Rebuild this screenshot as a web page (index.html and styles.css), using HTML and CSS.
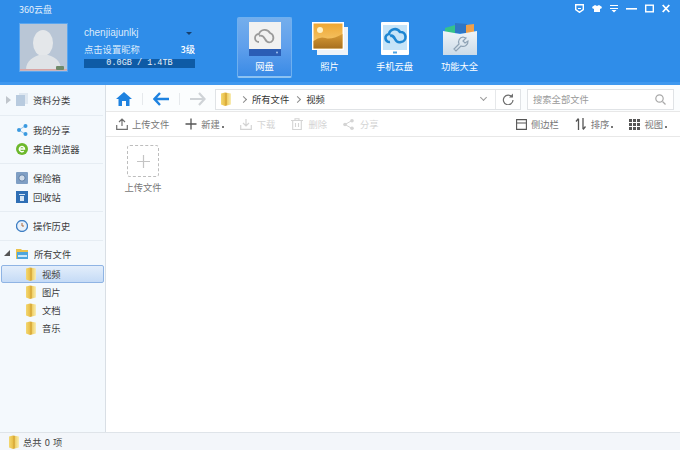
FILE: index.html
```html
<!DOCTYPE html>
<html lang="zh">
<head>
<meta charset="utf-8">
<title>360云盘</title>
<link rel="stylesheet" href="styles.css">
</head>
<body>
<svg class="defs" width="0" height="0">
  <defs>
    <linearGradient id="fold" x1="0" y1="0" x2="1" y2="0"><stop offset="0" stop-color="#f3d873"/><stop offset=".42" stop-color="#e8bd45"/><stop offset=".5" stop-color="#c9952a"/><stop offset=".62" stop-color="#f0d065"/><stop offset="1" stop-color="#f8ecb4"/></linearGradient>
    <linearGradient id="sky" x1="0" y1="0" x2="0" y2="1"><stop offset="0" stop-color="#efa733"/><stop offset="1" stop-color="#f6cf7a"/></linearGradient>
    <linearGradient id="hill" x1="0" y1="0" x2="0" y2="1"><stop offset="0" stop-color="#d89a35"/><stop offset="1" stop-color="#a8701f"/></linearGradient>
    <linearGradient id="box" x1="0" y1="0" x2="0" y2="1"><stop offset="0" stop-color="#f0f4f8"/><stop offset="1" stop-color="#ccdbe8"/></linearGradient>
    <symbol id="folder" viewBox="0 0 12 14"><path d="M1 1.500l4-1 6 1v11l-6 1.500-4-1.500z" fill="url(#fold)"/></symbol>
  </defs>
</svg>
<div class="app">
  <header class="top">
    <div class="user">
      <div class="app-title">360云盘</div>
      <div class="user-row">
        <svg class="avatar" width="47" height="47" viewBox="0 0 47 47">
          <rect width="47" height="47" fill="#b9c6d6"/>
          <ellipse cx="23" cy="19" rx="10" ry="13" fill="#e4e7ea"/>
          <path d="M6 46c0-10 8-13 13-15h9c6 2 13 5 13 15z" fill="#dfe3e7"/>
          <rect y="45" width="47" height="1.500" fill="#d8a5a5"/>
          <rect x="36" y="42" width="8" height="4" rx="1" fill="#6f8a6a"/>
        </svg>
        <div class="user-info">
          <div class="info-line"><span>chenjiajunlkj</span><i class="caret"></i></div>
          <div class="info-line"><span>点击设置昵称</span><b>3级</b></div>
          <div class="quota">0.0GB / 1.4TB</div>
        </div>
      </div>
    </div>
    <nav class="tabs">
      <div class="tab tab-on">
        <svg width="32" height="34" viewBox="0 0 32 34"><rect width="32" height="34" fill="#f1f1f1"/><rect y="27" width="32" height="7" fill="#2b5db5"/><circle cx="28" cy="30.500" r="1" fill="#9fc0ee"/><path d="M10 20a4 4 0 0 1 0-8 6 6 0 0 1 11-1 5 5 0 0 1 1 9c-3 1-5-1-6-3s-3-4-6-3" fill="none" stroke="#9a9a9a" stroke-width="1.800"/></svg>
        <span>网盘</span>
      </div>
      <div class="tab">
        <svg width="36" height="33" viewBox="0 0 36 33"><rect x="5" y="5" width="31" height="28" fill="#eef3f8"/><rect width="32" height="28" fill="#fff"/><rect x="1.500" y="1.500" width="29" height="25" fill="url(#sky)"/><path d="M1.500 19q6-5 12-3t17-4v14.500h-29z" fill="url(#hill)"/><circle cx="8" cy="8" r="3" fill="#fff3c8"/></svg>
        <span>照片</span>
      </div>
      <div class="tab">
        <svg width="28" height="33" viewBox="0 0 28 33"><rect width="28" height="33" rx="1" fill="#fff"/><rect x="2" y="3" width="24" height="25" fill="#c6e4f8"/><path d="M9 20a4 4 0 0 1-1-8 6 6 0 0 1 11-2 5 5 0 0 1 1 10c-3 1-5-1-6-3s-3-4-5-3" fill="none" stroke="#1e86d2" stroke-width="2.600"/><rect x="12" y="29.500" width="4" height="2" fill="#4fa3e3"/></svg>
        <span>手机云盘</span>
      </div>
      <div class="tab">
        <svg width="36" height="33" viewBox="0 0 36 33"><path d="M3 6l10-3v8H3z" fill="#35c28a"/><path d="M13 1l12 1v9H13z" fill="#2f76c5"/><path d="M24 3l8-1v9h-8z" fill="#f0a04a"/><path d="M1 9l17 3 17-3v24H1z" fill="url(#box)"/><path d="M21 15a5 5 0 0 0-4 7l-5 5 2 2 5-5a5 5 0 0 0 7-5l-3 2-2-2 3-3z" fill="none" stroke="#8fa3b5" stroke-width="1.200"/></svg>
        <span>功能大全</span>
      </div>
    </nav>
    <div class="win">
      <svg width="9" height="9" viewBox="0 0 9 9"><path d="M.7.700h7.600v5L4.500 8.300.7 5.700z" fill="none" stroke="#fff" stroke-width="1.400"/><path d="M3 4.500h3" stroke="#fff"/></svg>
      <svg width="10" height="9" viewBox="0 0 10 9"><path d="M3 1l2 1 2-1 3 2-1 2-1-.5V8H2V4.500L1 5 0 3z" fill="#fff"/></svg>
      <svg width="8" height="9" viewBox="0 0 8 9"><path d="M0 1h8v1H0zM0 4h8v1H0zM1.500 6h5L4 8.500z" fill="#fff"/></svg>
      <svg width="11" height="9" viewBox="0 0 11 9"><path d="M0 4h11v1.600H0z" fill="#fff"/></svg>
      <svg width="9" height="9" viewBox="0 0 9 9"><rect x=".7" y="1.200" width="7.600" height="6.600" fill="none" stroke="#fff" stroke-width="1.400"/></svg>
      <svg width="8" height="9" viewBox="0 0 8 9"><path d="M.7 1l6.600 7M7.300 1L.7 8" stroke="#fff" stroke-width="1.800"/></svg>
    </div>
  </header>

  <div class="body">
    <aside class="side">
      <div class="group">
        <div class="row"><i class="tri tri-r"></i>
          <svg class="ic" width="12" height="13" viewBox="0 0 12 13"><path d="M3 0h9v11H3z" fill="#dfe8f1"/><path d="M0 2h9v11H0z" fill="#b8cbdf"/></svg>
          <span>资料分类</span></div>
      </div>
      <div class="group">
        <div class="row"><svg class="ic" width="12" height="12" viewBox="0 0 12 12"><path d="M3 6l6-4M3 6l6 4" stroke="#9cc6ea"/><circle cx="3" cy="6" r="2" fill="#3a9ae0"/><circle cx="9.500" cy="2" r="2" fill="#3a9ae0"/><circle cx="9.500" cy="10" r="2" fill="#3a9ae0"/></svg><span>我的分享</span></div>
        <div class="row"><svg class="ic" width="12" height="12" viewBox="0 0 12 12"><circle cx="6" cy="6" r="6" fill="#6cb82c"/><path d="M3.500 6h5a2.600 2.600 0 1 0-.8 2" fill="none" stroke="#fff" stroke-width="1.400"/></svg><span>来自浏览器</span></div>
      </div>
      <div class="group">
        <div class="row"><svg class="ic" width="12" height="12" viewBox="0 0 12 12"><rect width="12" height="12" rx="1" fill="#7f9fc4"/><circle cx="6" cy="6" r="3.200" fill="#cfdbe8" stroke="#5d7ea6"/></svg><span>保险箱</span></div>
        <div class="row"><svg class="ic" width="12" height="12" viewBox="0 0 12 12"><rect width="12" height="12" fill="#2f6fb5"/><path d="M3 3h6v1H3zM4 5h4v5H4z" fill="#d6e6f5"/></svg><span>回收站</span></div>
      </div>
      <div class="group">
        <div class="row"><svg class="ic" width="12" height="12" viewBox="0 0 12 12"><circle cx="6" cy="6" r="5.500" fill="#e9f1f9" stroke="#3f7fc4" stroke-width="1.300"/><path d="M6 3v3h2" fill="none" stroke="#b06a3a"/></svg><span>操作历史</span></div>
      </div>
      <div class="tree">
        <div class="row tree-root"><i class="tri tri-d"></i><svg class="ic" width="13" height="12" viewBox="0 0 13 12"><path d="M0 1h5l1 1h6v9H0z" fill="#e9c24c"/><path d="M1 4h11v7H1z" fill="#4ea6dc"/><path d="M2 7h9v2H2z" fill="#cde7f6"/></svg><span>所有文件</span></div>
        <div class="row sub sub-on"><svg class="ic" width="12" height="14"><use href="#folder"/></svg><span>视频</span></div>
        <div class="row sub"><svg class="ic" width="12" height="14"><use href="#folder"/></svg><span>图片</span></div>
        <div class="row sub"><svg class="ic" width="12" height="14"><use href="#folder"/></svg><span>文档</span></div>
        <div class="row sub"><svg class="ic" width="12" height="14"><use href="#folder"/></svg><span>音乐</span></div>
      </div>
    </aside>

    <main class="main">
      <div class="navbar">
        <svg width="16" height="14" viewBox="0 0 16 14"><path d="M8 0L0 7h2.500v7H6V9h4v5h3.500V7H16z" fill="#1e82e0"/></svg>
        <i class="sep"></i>
        <svg width="16" height="14" viewBox="0 0 16 14"><path d="M7 1L1.500 7 7 13M2 7h14" fill="none" stroke="#1e82e0" stroke-width="2.400"/></svg>
        <i class="sep"></i>
        <svg width="16" height="14" viewBox="0 0 16 14"><path d="M9 1l5.500 6L9 13M14 7H0" fill="none" stroke="#cfd3d7" stroke-width="2.200"/></svg>
        <div class="path">
          <svg class="pf" width="12" height="14"><use href="#folder"/></svg>
          <i class="chev"></i><span>所有文件</span><i class="chev"></i><span>视频</span>
          <i class="drop"></i>
          <div class="refresh"><svg width="12" height="12" viewBox="0 0 12 12"><path d="M10 4a4.800 4.800 0 1 0 1 3" fill="none" stroke="#6f6f6f" stroke-width="1.200"/><path d="M11 .5v4H7z" fill="#6f6f6f"/></svg></div>
        </div>
        <div class="search"><span>搜索全部文件</span>
          <svg width="11" height="11" viewBox="0 0 11 11"><circle cx="4.500" cy="4.500" r="3.700" fill="none" stroke="#a9a9a9" stroke-width="1.200"/><path d="M7.500 7.500l3 3" stroke="#a9a9a9" stroke-width="1.300"/></svg></div>
      </div>
      <div class="tools">
        <div class="tool"><svg width="12" height="12" viewBox="0 0 12 12"><path d="M6 8V1M3 4l3-3 3 3M.7 7v4.300h10.600V7" fill="none" stroke="#6f6f6f" stroke-width="1.200"/></svg><span>上传文件</span></div>
        <div class="tool"><svg width="12" height="12" viewBox="0 0 12 12"><path d="M6 .5v11M.5 6h11" stroke="#555" stroke-width="1.300"/></svg><span>新建</span><i class="dot"></i></div>
        <div class="tool off"><svg width="12" height="12" viewBox="0 0 12 12"><path d="M6 1v7M3 5l3 3 3-3M.7 7v4.300h10.600V7" fill="none" stroke="#d4d4d4" stroke-width="1.200"/></svg><span>下载</span></div>
        <div class="tool off"><svg width="12" height="12" viewBox="0 0 12 12"><path d="M0 2.500h12M4 2.500V.7h4v1.800M1.700 2.500v9h8.600v-9M4.500 5v4M7.500 5v4" fill="none" stroke="#d4d4d4" stroke-width="1.100"/></svg><span>删除</span></div>
        <div class="tool off"><svg width="12" height="11" viewBox="0 0 12 11"><path d="M2 5.500l7-4M2 5.500l7 4" stroke="#d4d4d4"/><circle cx="2" cy="5.500" r="1.800" fill="#d4d4d4"/><circle cx="9" cy="1.800" r="1.800" fill="#d4d4d4"/><circle cx="9" cy="9.200" r="1.800" fill="#d4d4d4"/></svg><span>分享</span></div>
        <div class="grow"></div>
        <div class="tool"><svg width="12" height="11" viewBox="0 0 12 11"><path d="M1.600.6h9.800v9.800H1.600zM1.600 4h9.800" fill="none" stroke="#555" stroke-width="1.100"/></svg><span>侧边栏</span></div>
        <div class="tool"><svg width="12" height="12" viewBox="0 0 12 12"><path d="M3.500 12V1M1 3.500l2.500-3M8 0v11M10.500 8.500l-2.500 3" fill="none" stroke="#555" stroke-width="1.300"/></svg><span>排序</span><i class="dot"></i></div>
        <div class="tool"><svg width="11" height="11" viewBox="0 0 11 11"><path d="M0 0h3v3H0zM4 0h3v3H4zM8 0h3v3H8zM0 4h3v3H0zM4 4h3v3H4zM8 4h3v3H8zM0 8h3v3H0zM4 8h3v3H4zM8 8h3v3H8z" fill="#555"/></svg><span>视图</span><i class="dot"></i></div>
      </div>
      <div class="files">
        <div class="upload">
          <div class="upbox"><svg width="13" height="13" viewBox="0 0 13 13"><path d="M6.500 0v13M0 6.500h13" stroke="#c4c4c4" stroke-width="1.200"/></svg></div>
          <span>上传文件</span>
        </div>
      </div>
    </main>
  </div>

  <footer class="status"><svg width="12" height="14"><use href="#folder"/></svg><span>总共 0 项</span></footer>
</div>
</body>
</html>
```

FILE: styles.css
```css
* { box-sizing: border-box; }
html, body { margin: 0; padding: 0; }
body { width: 680px; height: 450px; overflow: hidden; background: #fff; color: #444;
  font-family: "Noto Sans CJK SC", "Liberation Sans", sans-serif; font-size: 9.3px; line-height: 12px; }
.defs { position: absolute; }
.app { display: flex; flex-direction: column; height: 450px; }
.top { height: 85px; flex: none; display: flex; background: #2f8de9; border-bottom: 3px solid #3f98ef; color: #fff; }
.user { width: 237px; flex: none; padding: 3px 0 0 20px; }
.app-title { height: 15px; line-height: 13px; margin-left: -1px; font-size: 9px; color: #e6f1fc; }
.user-row { display: flex; margin-top: 6px; gap: 17px; }
.avatar { flex: none; box-shadow: 0 0 0 1px #5aa6ef; }
.user-info { width: 111px; padding-top: 1px; }
.info-line { display: flex; justify-content: space-between; align-items: center; height: 16px; color: #dbeafb; }
.info-line b { font-weight: 500; color: #fff; }
.info-line:first-child { font-family: "Liberation Sans", sans-serif; font-size: 10px; }
.caret { width: 0; height: 0; border: 3px solid transparent; border-top: 3px solid #17406e; margin: 3px 3px 0 0; }
.quota { height: 9px; margin-top: 2px; background: #0e5ba6; color: #e8f2fb; text-align: center;
  font-family: "Liberation Mono", monospace; font-size: 8.5px; line-height: 9px; }
.tabs { display: flex; gap: 10px; padding-top: 17px; }
.tab { width: 55px; height: 61px; display: flex; flex-direction: column; align-items: center; padding-top: 4px; color: #fff; border: 1px solid transparent; }
.tab svg { flex: none; }
.tab span { margin-top: 5px; }
.tab-on span { margin-top: 4px; }
.tab-on { background: linear-gradient(#74aeec 0, #5f9fec 50%, #3a8be6 100%); border-color: #6fb0ef; border-bottom: 2px solid #8cc2f2; border-radius: 2px; }
.win { margin-left: auto; display: flex; gap: 8px; padding: 4px 10px 0 0; height: 13px; }
.win svg { flex: none; }

.body { flex: 1; min-height: 0; display: flex; }
.side { width: 106px; flex: none; background: #f4f9fd; border-right: 1px solid #d9dfe5; }
.group { border-bottom: 1px solid #e6edf3; padding: 4px 0 5px; margin-right: 2px; }
.group:first-child { padding: 5px 0 6px; }
.row { height: 19px; display: flex; align-items: center; position: relative; padding-left: 16px; color: #3d3d3d; }
.row .ic { flex: none; margin-right: 5px; }
.tri { position: absolute; left: 6px; width: 0; height: 0; border: 4px solid transparent; }
.tri-r { border-left: 5px solid #c0c6cc; border-right: 0; }
.tri-d { left: 4px; margin-top: -2px; border-width: 0 0 6px 6px; border-color: transparent transparent #555 transparent; }
.tree { padding-top: 4px; }
.tree-root { height: 20px; padding-bottom: 2px; }
.tree .sub { height: 18px; }
.sub { padding-left: 24px; margin: 0 1px; }
.sub .ic { margin-right: 5px; }
.sub-on { background: linear-gradient(#e3eefb, #c5dbf6); border: 1px solid #8fb4e4; border-radius: 2px; padding-left: 23px; }

.main { flex: 1; min-width: 0; display: flex; flex-direction: column; }
.navbar { height: 27px; flex: none; display: flex; align-items: center; padding: 2px 0 0 10px; background: #fbfdfe; border-bottom: 1px solid #e8e8e8; gap: 10px; }
.navbar svg { flex: none; }
.sep { width: 1px; height: 12px; background: #e6e9ec; }
.path { width: 306px; height: 21px; margin-left: -1px; display: flex; align-items: center; background: #fff; border: 1px solid #e0e3e6; color: #333; }
.pf { margin: 0 4px 0 4px; }
.chev { width: 5px; height: 5px; border: solid #8a8a8a; border-width: 1px 1px 0 0; transform: rotate(45deg); margin: 0 6px 0 5px; }
.chev + span + .chev { margin-left: 6px; }
.drop { margin-left: auto; width: 5px; height: 5px; border: solid #9a9a9a; border-width: 0 1px 1px 0; transform: rotate(45deg); margin-right: 9px; margin-top: -3px; }
.refresh { width: 25px; height: 100%; border-left: 1px solid #e6e8ea; display: flex; align-items: center; justify-content: center; }
.search { width: 147px; height: 21px; margin-left: -4px; display: flex; align-items: center; justify-content: space-between; padding: 0 7px 0 5px; border: 1px solid #e0e3e6; background: #fff; color: #9a9a9a; }
.tools { height: 25px; flex: none; display: flex; align-items: center; padding: 0 13px 0 10px; gap: 16px; background: #fff; border-bottom: 1px solid #e8e8e8; color: #777; }
.tool { display: flex; align-items: center; gap: 4px; position: relative; }
.tool svg { flex: none; }
.off { color: #d4d4d4; gap: 5px; }
.dot { width: 2px; height: 2px; background: #777; margin: 5px 0 0 -2px; }
.grow { flex: 1; }
.files { flex: 1; padding: 8px 0 0 12px; }
.upload { width: 50px; display: flex; flex-direction: column; align-items: center; gap: 4px; color: #777; }
.upbox { width: 32px; height: 32px; border: 1px dashed #bdbdbd; border-radius: 3px; display: flex; align-items: center; justify-content: center; }
.status { height: 18px; flex: none; display: flex; align-items: center; gap: 3px; padding-left: 8px; background: #f3f6fa; border-top: 1px solid #dfe4e9; color: #444; word-spacing: 1px; }
```
